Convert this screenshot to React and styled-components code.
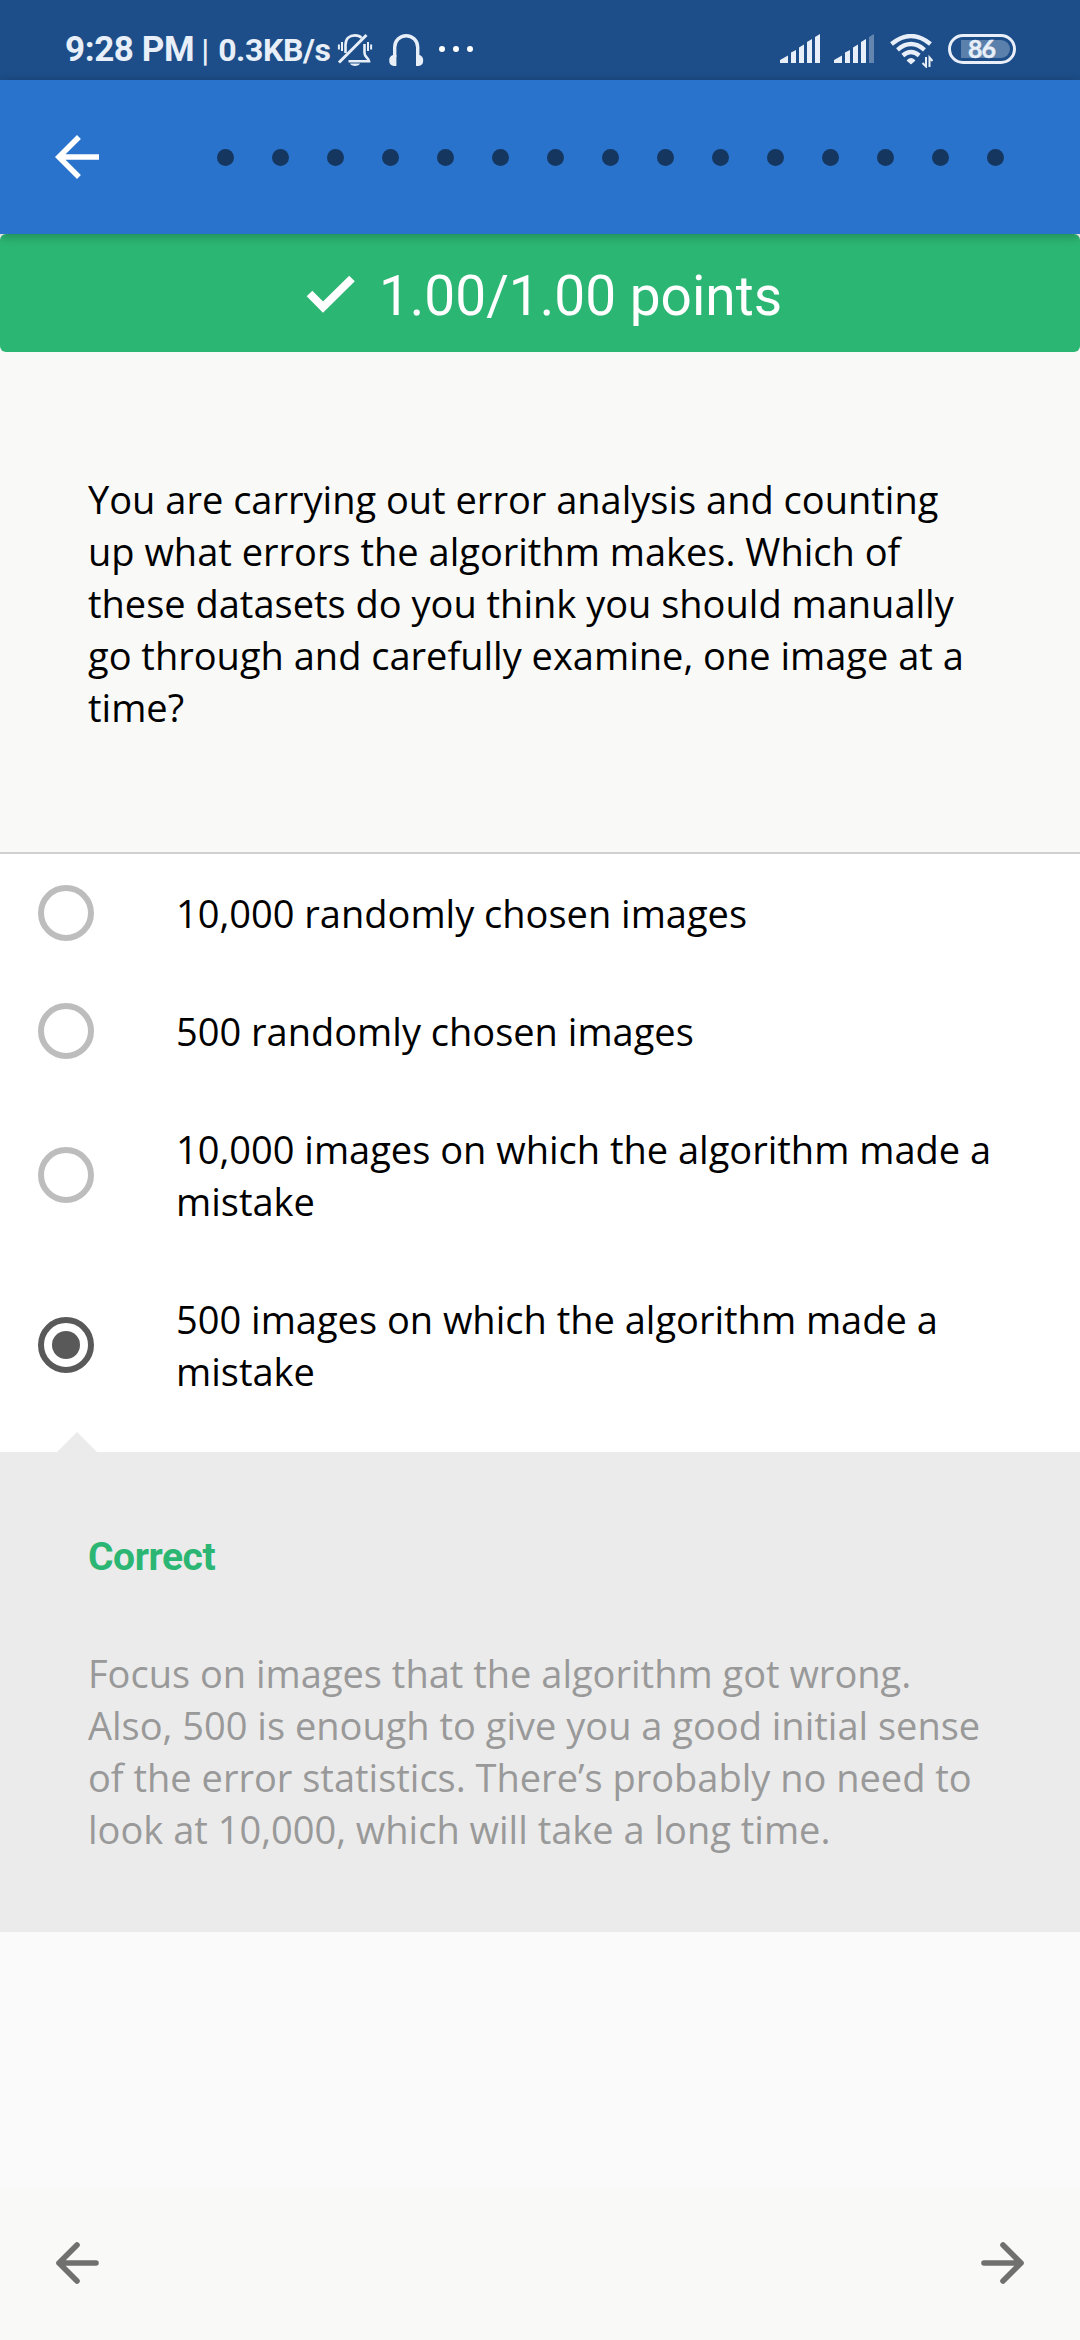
import React from "react";
import styled, { createGlobalStyle } from "styled-components";

const GlobalStyle = createGlobalStyle`
  * { box-sizing: border-box; }
  body { margin: 0; background: #fafafa; }
`;

const Screen = styled.div`
  display: flex;
  flex-direction: column;
  width: 1080px;
  height: 2340px;
  overflow: hidden;
  background: #fafafa;
  font-family: "Open Sans", "Noto Sans", sans-serif;
`;

const StatusBar = styled.header`
  display: flex;
  align-items: flex-start;
  justify-content: space-between;
  height: 80px;
  flex: none;
  padding: 29px 64px 0 65px;
  background: #1d4e89;
  color: #e8eff8;
`;

const StatusGroup = styled.div`
  display: flex;
  align-items: center;
  height: 42px;
`;

const SystemIcons = styled.div`
  display: flex;
  align-items: flex-start;
  padding-top: 5px;
`;

const StatusText = styled.span`
  font-family: Roboto, sans-serif;
  font-weight: ${(p) => p.$weight || 700};
  font-size: ${(p) => p.$size}px;
  line-height: 42px;
  letter-spacing: ${(p) => p.$spacing || 0}px;
  margin-left: ${(p) => p.$gap || 0}px;
  white-space: pre;
`;

const Icon = styled.svg`
  display: block;
  flex: none;
  width: ${(p) => p.$w}px;
  height: ${(p) => p.$h}px;
  margin-left: ${(p) => p.$gap || 0}px;
  margin-bottom: ${(p) => p.$raise || 0}px;
`;

const BatteryLevel = styled.text`
  font-family: Lato, sans-serif;
  font-weight: 700;
  font-size: 25px;
  letter-spacing: -0.8px;
  text-anchor: middle;
  fill: currentColor;
  stroke: currentColor;
  stroke-width: 0.4px;
`;

const AppBar = styled.nav`
  display: flex;
  align-items: center;
  height: 154px;
  flex: none;
  padding: 0 76px 0 44px;
  justify-content: space-between;
  background: #2a73cc;
  box-shadow: 0 2px 10px rgba(0, 0, 0, 0.28);
  z-index: 1;
`;

const IconButton = styled.button`
  display: flex;
  padding: 0;
  border: 0;
  background: none;
  color: ${(p) => p.$color};
`;

const Dots = styled.div`
  display: flex;
  gap: 38px;
`;

const Dot = styled.span`
  width: 17px;
  height: 17px;
  border-radius: 50%;
  background: #14365f;
`;

const ScoreBanner = styled.div`
  display: flex;
  align-items: center;
  justify-content: center;
  flex: none;
  height: 118px;
  padding: 5px 0 0 8px;
  border-radius: 6px;
  background: #2cb673;
  color: #fff;
  font-family: Roboto, sans-serif;
  font-size: 55px;
  line-height: 66px;
`;

const ScoreText = styled.span`
  margin-left: 23px;
`;

const Question = styled.section`
  flex: none;
  height: 502px;
  padding: 121px 88px 0;
  background: #f9f9f7;
  border-bottom: 2px solid #d0d0d0;
`;

const Body = styled.p`
  margin: 0;
  font-size: 38px;
  line-height: 52px;
  color: ${(p) => p.$color || "#000"};
  white-space: nowrap;
`;

const Options = styled.ul`
  flex: none;
  height: 598px;
  margin: 0;
  padding: 0;
  list-style: none;
  background: #fff;
`;

const Option = styled.li`
  display: flex;
  align-items: center;
  padding: 33px 0 33px 38px;
  gap: 82px;
`;

const Radio = styled.span`
  display: flex;
  align-items: center;
  justify-content: center;
  flex: none;
  width: 56px;
  height: 56px;
  margin: -2px 0;
  border: 6px solid ${(p) => (p.$checked ? "#595959" : "#bdbdbd")};
  border-radius: 50%;

  &::after {
    content: "";
    width: 28px;
    height: 28px;
    border-radius: 50%;
    background: ${(p) => (p.$checked ? "#595959" : "transparent")};
  }
`;

const Feedback = styled.section`
  position: relative;
  flex: none;
  height: 480px;
  padding: 83px 88px 0;
  background: #ebebeb;

  &::before {
    content: "";
    position: absolute;
    left: 57px;
    top: -20px;
    border: solid transparent;
    border-width: 0 20px 20px;
    border-bottom-color: #ebebeb;
  }
`;

const Verdict = styled.h2`
  margin: 0 0 68px;
  font-family: Roboto, sans-serif;
  font-weight: 700;
  font-size: 39px;
  line-height: 44px;
  letter-spacing: -0.45px;
  color: #2cb673;
`;

const Pager = styled.footer`
  display: flex;
  align-items: center;
  justify-content: space-between;
  height: 154px;
  flex: none;
  margin-top: auto;
  padding: 0 44px;
  background: #f9f9f7;
`;

const options = [
  { lines: ["10,000 randomly chosen images"] },
  { lines: ["500 randomly chosen images"] },
  { lines: ["10,000 images on which the algorithm made a", "mistake"] },
  { lines: ["500 images on which the algorithm made a", "mistake"], checked: true },
];

const question = [
  "You are carrying out error analysis and counting",
  "up what errors the algorithm makes. Which of",
  "these datasets do you think you should manually",
  "go through and carefully examine, one image at a",
  "time?",
];

const explanation = [
  "Focus on images that the algorithm got wrong.",
  "Also, 500 is enough to give you a good initial sense",
  "of the error statistics. There’s probably no need to",
  "look at 10,000, which will take a long time.",
];

function Lines({ lines, color }) {
  return (
    <Body $color={color}>
      {lines.map((line, i) => (
        <React.Fragment key={line}>
          {i > 0 && <br />}
          {line}
        </React.Fragment>
      ))}
    </Body>
  );
}

function MutedBell() {
  return (
    <Icon $w={36} $h={34} $gap={7} viewBox="0 0 36 34" fill="none" stroke="currentColor" strokeWidth="2.6">
      <path d="M8.500 20V12C8.500 5.500 12.500 2.400 18 2.400c3 0 5 .8 6.500 2.400" />
      <path d="M27.500 11v9c0 4 4 5 4.500 8.300H11.500" />
      <path d="M2 29.500 29.500 2" strokeWidth="3" />
      <path d="M5 9v9M1.900 11.500v5M31 9v9M34.100 11.500v5" strokeWidth="2" />
      <path d="M13 30.500h10c-1 3.200-9 3.200-10 0z" fill="currentColor" stroke="none" />
    </Icon>
  );
}

function Headphones() {
  return (
    <Icon $w={36} $h={34} $gap={15} viewBox="0 0 36 34" fill="none" stroke="currentColor">
      <path d="M6.700 24V14.200a11.500 11.500 0 0 1 23 0V24" strokeWidth="3.400" />
      <path d="M5 22h3.400v11H5.500q-4.300-1-4.300-5.500T5 22zM31.400 22H28v11h2.900q4.300-1 4.300-5.500T31.400 22z" fill="currentColor" stroke="none" />
    </Icon>
  );
}

function Signal({ gap, faded }) {
  return (
    <Icon $w={40} $h={29} $gap={gap} viewBox="0 0 40 29" fill="currentColor">
      <path d="M0 29v-3l8-4.500V29z" />
      <path d="M11 29V18.500l5-2.500v13z" />
      <path d="M19 29V13.500l5-3V29z" />
      <path d="M27 29V8l5-3v24z" />
      <path d="M35 29V3l5-3v29z" opacity={faded ? 0.35 : 1} />
    </Icon>
  );
}

function Wifi() {
  return (
    <Icon $w={43} $h={34} $gap={16} viewBox="0 0 43 34" fill="none" stroke="currentColor" strokeWidth="4.300">
      <path d="M1.500 10Q21-6 40.500 10M7.500 15.800q13.500-11.500 27 0M12.800 21.500q8.200-7 16.400 0" />
      <path d="M21 29.500l-3.500-3q3.500-3.500 7 0z" fill="currentColor" strokeWidth="1.500" strokeLinejoin="round" />
      <path d="M36 23v9.500l-3.500-3.500M39.500 33v-9.500l3 3.500" strokeWidth="2" />
    </Icon>
  );
}

function Battery() {
  return (
    <Icon $w={68} $h={30} $gap={15} viewBox="0 0 68 30">
      <rect x="1.500" y="1.500" width="65" height="27" rx="13.500" fill="none" stroke="currentColor" strokeWidth="3" />
      <path d="M13 6h40a9 9 0 0 1 0 18H13z" fill="#5b80ab" />
      <BatteryLevel x="33.600" y="24">86</BatteryLevel>
    </Icon>
  );
}

function BackArrow() {
  return (
    <Icon $w={66} $h={66} viewBox="0 0 24 24" fill="currentColor">
      <path d="M20 11H7.830l5.590-5.590L12 4l-8 8 8 8 1.410-1.410L7.830 13H20v-2z" />
    </Icon>
  );
}

function PagerArrow({ forward }) {
  return (
    <Icon $w={66} $h={66} viewBox="0 0 66 66" fill="none" stroke="currentColor" strokeWidth="5.600" strokeLinecap="round" strokeLinejoin="round">
      <path d={forward ? "M14 33h37M33 15l18 18-18 18" : "M52 33H15M33 15 15 33l18 18"} />
    </Icon>
  );
}

export default function App() {
  return (
    <Screen>
      <GlobalStyle />
      <StatusBar>
        <StatusGroup>
          <StatusText $size={35} $spacing={-0.4}>9:28 PM</StatusText>
          <StatusText $size={32} $weight={500} $gap={7}>|</StatusText>
          <StatusText $size={32} $spacing={-0.4} $gap={9}>0.3KB/s</StatusText>
          <MutedBell />
          <Headphones />
          <Icon $w={36} $h={6} $gap={15} $raise={2} viewBox="0 0 36 6" fill="#fff">
            <circle cx="3" cy="3" r="3" />
            <circle cx="17" cy="3" r="3" />
            <circle cx="31" cy="3" r="3" />
          </Icon>
        </StatusGroup>
        <SystemIcons>
          <Signal />
          <Signal gap={14} faded />
          <Wifi />
          <Battery />
        </SystemIcons>
      </StatusBar>
      <AppBar>
        <IconButton $color="#fff" aria-label="Back">
          <BackArrow />
        </IconButton>
        <Dots>
          {Array.from({ length: 15 }, (_, i) => (
            <Dot key={i} />
          ))}
        </Dots>
      </AppBar>
      <ScoreBanner>
        <Icon $w={50} $h={38} $raise={4} viewBox="0 0 50 38" fill="none" stroke="currentColor" strokeWidth="8">
          <path d="M3.500 18.500 17 32 46 3.500" />
        </Icon>
        <ScoreText>1.00/1.00 points</ScoreText>
      </ScoreBanner>
      <Question>
        <Lines lines={question} />
      </Question>
      <Options>
        {options.map((option) => (
          <Option key={option.lines[0]}>
            <Radio $checked={option.checked} />
            <Lines lines={option.lines} />
          </Option>
        ))}
      </Options>
      <Feedback>
        <Verdict>Correct</Verdict>
        <Lines lines={explanation} color="#999" />
      </Feedback>
      <Pager>
        <IconButton $color="#70706e" aria-label="Previous">
          <PagerArrow />
        </IconButton>
        <IconButton $color="#70706e" aria-label="Next">
          <PagerArrow forward />
        </IconButton>
      </Pager>
    </Screen>
  );
}
